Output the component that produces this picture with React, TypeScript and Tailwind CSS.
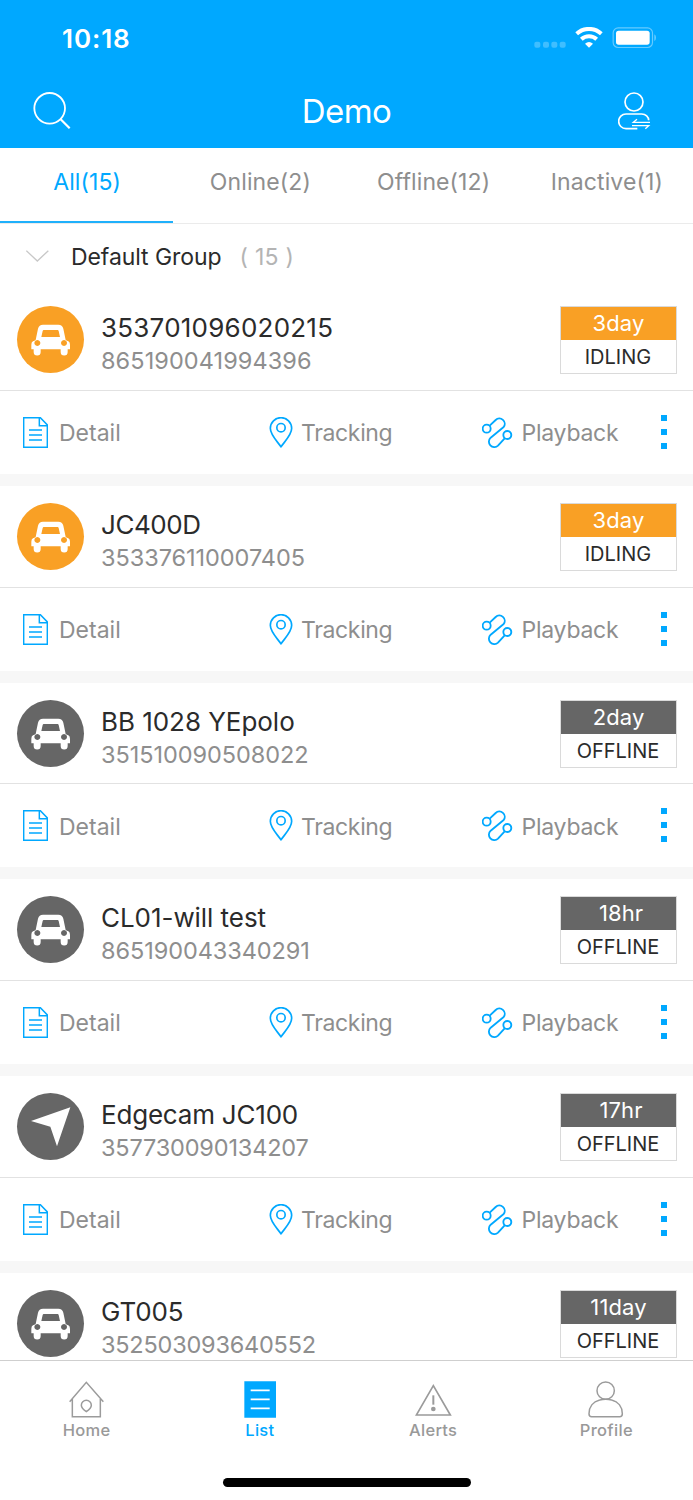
import React from 'react';

interface Device {
  name: string;
  imei: string;
  time: string;
  status: 'IDLING' | 'OFFLINE';
  icon: 'car' | 'arrow';
  nameSpacing: string;
  imeiSpacing: string;
}

const devices: Device[] = [
  { name: '353701096020215', imei: '865190041994396', time: '3day', status: 'IDLING', icon: 'car', nameSpacing: 'tracking-[0.23px]', imeiSpacing: 'tracking-[0.08px]' },
  { name: 'JC400D', imei: '353376110007405', time: '3day', status: 'IDLING', icon: 'car', nameSpacing: 'tracking-[-0.45px]', imeiSpacing: 'tracking-[-0.05px]' },
  { name: 'BB 1028 YEpolo', imei: '351510090508022', time: '2day', status: 'OFFLINE', icon: 'car', nameSpacing: 'tracking-[-0.04px]', imeiSpacing: 'tracking-[-0.05px]' },
  { name: 'CL01-will test', imei: '865190043340291', time: '18hr', status: 'OFFLINE', icon: 'car', nameSpacing: 'tracking-[-0.05px]', imeiSpacing: 'tracking-[-0.07px]' },
  { name: 'Edgecam JC100', imei: '357730090134207', time: '17hr', status: 'OFFLINE', icon: 'arrow', nameSpacing: 'tracking-[-0.2px]', imeiSpacing: 'tracking-[-0.18px]' },
  { name: 'GT005', imei: '352503093640552', time: '11day', status: 'OFFLINE', icon: 'car', nameSpacing: 'tracking-[-0.15px]', imeiSpacing: 'tracking-[-0.22px]' },
];

const tabs = [
  { label: 'All(15)', active: true },
  { label: 'Online(2)', active: false },
  { label: 'Offline(12)', active: false },
  { label: 'Inactive(1)', active: false },
];

const SearchIcon = () => (
  <svg className="w-[38px] h-[38px]" viewBox="0 0 114 114" fill="none" stroke="white" strokeWidth="5.5">
    <circle cx="50" cy="49" r="46" />
    <path d="M83 82l27 27" strokeWidth="6.5" />
  </svg>
);

const SwitchUserIcon = () => (
  <svg className="w-[33px] h-[38px]" viewBox="0 0 99 114" fill="none" stroke="white" strokeWidth="5">
    <circle cx="48" cy="30" r="27" />
    <path d="M92 85c0-11-9-19-21-19H24a22 22 0 0 0 0 44h34" />
    <path d="M96 91H46l11-9M42 101h50l-10 9" strokeWidth="4" />
  </svg>
);

const CarIcon = () => (
  <svg className="w-[67px] h-[67px]" viewBox="0 0 201 201">
    <path
      fill="white"
      fillRule="evenodd"
      d="M78 56h46q12 0 15 12l7 34q4 2 8 4 5 3 5 10v14h-7v8a10.500 10.500 0 0 1-21 0v-8H71v8a10.500 10.500 0 0 1-21 0v-8h-7v-14q0-7 5-10 4-2 8-4l7-34q3-12 15-12zM80 72q-2 0-3 3l-4 18h56l-4-18q-1-3-3-3zM61 102a9 9 0 1 0 .1 0zM141 102a9 9 0 1 0 .1 0z"
    />
  </svg>
);

const ArrowIcon = () => (
  <svg className="w-[67px] h-[67px]" viewBox="0 0 201 201">
    <path fill="white" d="M42 84L160 43 120 160 100 101z" />
  </svg>
);

const DetailIcon = () => (
  <svg className="w-[25px] h-[31px]" viewBox="0 0 75 93" fill="none" stroke="#00a8ff" strokeWidth="4.500">
    <path d="M2 2h50l21 22v67H2z" />
    <path d="M49 2v24h24M18 39h39M18 54h39M18 69h39" />
  </svg>
);

const PinIcon = () => (
  <svg className="w-[24px] h-[31px]" viewBox="0 0 72 93" fill="none" stroke="#00a8ff" strokeWidth="5">
    <path d="M36 90C30 78 4 56 4 34a32 32 0 0 1 64 0c0 22-26 44-32 56z" strokeLinejoin="round" />
    <circle cx="36" cy="32" r="12.500" />
  </svg>
);

const RouteIcon = () => (
  <svg className="w-[31px] h-[31px]" viewBox="0 0 93 93" fill="none" stroke="#00a8ff" strokeWidth="5.500">
    <circle cx="14" cy="35" r="12" />
    <circle cx="76" cy="54" r="12" />
    <path d="M23 26L41 9a16 16 0 0 1 24 21L26 62a16 16 0 0 0 22 24L68 64" strokeLinejoin="round" />
  </svg>
);

const HomeIcon = () => (
  <svg className="w-[35px] h-[37px]" viewBox="0 0 105 111" fill="none" stroke="#9b9b9b" strokeWidth="4.500">
    <path d="M2 62L52 4l51 58M10 54v53h84V54" />
    <path d="M52 92C46 88 37 81 37 73a15 15 0 0 1 30 0c0 8-9 15-15 19z" />
  </svg>
);

const ListIcon = () => (
  <svg className="w-[32px] h-[37px]" viewBox="0 0 96 111">
    <path fill="#00a8ff" d="M1 1h95v109H1z" />
    <path d="M20 28h57M20 55h57M20 82h57" stroke="white" strokeWidth="5" />
  </svg>
);

const AlertIcon = () => (
  <svg className="w-[37px] h-[37px]" viewBox="0 0 111 111" fill="none" stroke="#9b9b9b" strokeWidth="5">
    <path d="M55 14L106 102H4z" />
    <path d="M55 43v28" strokeWidth="6" />
    <circle cx="55" cy="84" r="7" fill="#9b9b9b" stroke="none" />
  </svg>
);

const ProfileIcon = () => (
  <svg className="w-[36px] h-[37px]" viewBox="0 0 108 111" fill="none" stroke="#9b9b9b" strokeWidth="4.500">
    <circle cx="53" cy="29" r="26" />
    <path d="M35 57C15 62 3 78 3 98q0 9 8 9h84q8 0 8-9c0-20-12-36-32-41q-18-5-36 0z" />
  </svg>
);

const navItems = [
  { label: 'Home', icon: HomeIcon, active: false },
  { label: 'List', icon: ListIcon, active: true },
  { label: 'Alerts', icon: AlertIcon, active: false },
  { label: 'Profile', icon: ProfileIcon, active: false },
];

const StatusBar = () => (
  <div className="h-[76px] flex items-center justify-between pl-[62px] pr-[37px]">
    <span className="pt-px text-[26px] leading-8 font-semibold tracking-[0.9px] text-white">10:18</span>
    <svg className="w-[122px] h-[22px]" viewBox="0 0 366 66">
      <g fill="white" fillOpacity="0.25">
        <rect x="1" y="44" width="18" height="18" rx="6" />
        <rect x="27" y="44" width="18" height="18" rx="6" />
        <rect x="52" y="44" width="18" height="18" rx="6" />
        <rect x="77" y="44" width="18" height="18" rx="6" />
      </g>
      <g fill="none" stroke="white" strokeWidth="12">
        <path d="M128 20a55 55 0 0 1 74 0" />
        <path d="M142 37a34 34 0 0 1 46 0" />
      </g>
      <path fill="white" d="M153 50q12-10 24 0l-12 12z" />
      <rect x="237.500" y="2.500" width="118" height="59" rx="15" fill="none" stroke="white" strokeOpacity="0.4" strokeWidth="3.500" />
      <rect x="246" y="11" width="101" height="42" rx="8" fill="white" />
      <path fill="white" fillOpacity="0.4" d="M361 22q5 3 5 10t-5 10z" />
    </svg>
  </div>
);

const DeviceActions = () => (
  <div className="flex-1 flex items-center text-[23px] text-[#8e8e8e]">
    <div className="w-[246px] pl-[23px] flex items-center gap-[11px]">
      <DetailIcon />
      <span className="pt-[2px]">Detail</span>
    </div>
    <div className="w-[213px] pl-[23px] flex items-center gap-2">
      <PinIcon />
      <span className="pt-[2px] tracking-[-0.35px]">Tracking</span>
    </div>
    <div className="w-[202px] pl-[23px] flex items-center gap-[8.500px]">
      <RouteIcon />
      <span className="pt-[2px] tracking-[-0.25px]">Playback</span>
    </div>
    <div className="flex flex-col gap-2 pb-px">
      <span className="w-[6px] h-[6px] bg-[#00a8ff]" />
      <span className="w-[6px] h-[6px] bg-[#00a8ff]" />
      <span className="w-[6px] h-[6px] bg-[#00a8ff]" />
    </div>
  </div>
);

const DeviceCard: React.FC<{ device: Device; showActions: boolean }> = ({ device, showActions }) => {
  const idling = device.status === 'IDLING';

  return (
    <div className="h-[196.66px] shrink-0 bg-white border-b-[12px] border-[#f7f7f7] flex flex-col">
      {/* Device info */}
      <div className="h-[101.500px] shrink-0 flex items-start pt-[17px] pl-[17px] pr-4 border-b border-[#e2e2e2]">
        <div className={`w-[67px] h-[67px] shrink-0 rounded-full ${idling ? 'bg-[#f9a025]' : 'bg-[#666666]'}`}>
          {device.icon === 'car' ? <CarIcon /> : <ArrowIcon />}
        </div>
        <div className="flex-1 pl-[17px] pt-[5px] whitespace-nowrap">
          <div className={`text-[26px] leading-[33px] text-[#2b2b2b] ${device.nameSpacing}`}>{device.name}</div>
          <div className={`text-[23.500px] leading-[33px] text-[#8e8e8e] ${device.imeiSpacing}`}>{device.imei}</div>
        </div>
        <div className="w-[117px] h-[68px] shrink-0 border border-[#dadada] text-center">
          <div className={`h-[33px] text-[22px] leading-[33px] text-white tracking-[0.1px] ${device.time.endsWith('hr') ? 'pl-[5px]' : ''} ${idling ? 'bg-[#f9a025]' : 'bg-[#666666]'}`}>
            {device.time}
          </div>
          <div className="pr-px text-[20px] leading-[35px] text-[#2b2b2b]">{device.status}</div>
        </div>
      </div>

      {showActions && <DeviceActions />}
    </div>
  );
};

const App: React.FC = () => {
  return (
    <div className="w-[693px] h-[1500px] flex flex-col overflow-hidden bg-white font-['Inter',sans-serif]">
      {/* Header */}
      <header className="h-[148px] shrink-0 bg-[#00a8ff]">
        <StatusBar />
        <div className="h-[70px] flex items-center justify-between pl-[33px] pr-[42px]">
          <SearchIcon />
          <h1 className="pl-1 text-[33px] leading-10 tracking-[-0.6px] text-white">Demo</h1>
          <SwitchUserIcon />
        </div>
      </header>

      {/* Tabs */}
      <div className="h-[75.500px] shrink-0 grid grid-cols-4 border-b border-[#ebebeb]">
        {tabs.map((tab) => (
          <button
            key={tab.label}
            className={`pb-1 pl-px text-[23px] tracking-[0.1px] border-b-2 ${tab.active ? 'text-[#00a8ff] border-[#1fb0fb]' : 'text-[#8e8e8e] border-transparent'}`}
          >
            {tab.label}
          </button>
        ))}
      </div>

      {/* Group */}
      <div className="h-[65.900px] shrink-0 flex items-center pl-[26px] text-[23px]">
        <svg className="w-[23px] h-[12px]" viewBox="0 0 69 36" fill="none" stroke="#c8c8c8" strokeWidth="4">
          <path d="M1 2l33 31L67 2" />
        </svg>
        <span className="ml-[22px] pt-[2px] tracking-[-0.08px] text-[#2b2b2b]">Default Group</span>
        <span className="ml-[18px] pt-[2px] tracking-[0.3px] text-[#b4b4b4]">( 15 )</span>
      </div>

      <main className="flex-1 min-h-0 overflow-hidden flex flex-col">
        {devices.map((device, index) => (
          <DeviceCard key={device.imei} device={device} showActions={index < devices.length - 1} />
        ))}
      </main>

      {/* Bottom navigation */}
      <nav className="h-[140px] shrink-0 border-t border-[#cfcfcf] flex flex-col bg-white">
        <div className="grid grid-cols-4 pt-[20px]">
          {navItems.map((item) => (
            <div key={item.label} className="flex flex-col items-center">
              <item.icon />
              <span className={`mt-[2px] text-[16.500px] leading-5 font-medium tracking-[0.3px] ${item.active ? 'text-[#00a8ff]' : 'text-[#999999]'}`}>
                {item.label}
              </span>
            </div>
          ))}
        </div>
        <div className="w-[248px] h-[9px] mt-auto mb-[13px] mx-auto rounded-full bg-black" />
      </nav>
    </div>
  );
};

export default App;
